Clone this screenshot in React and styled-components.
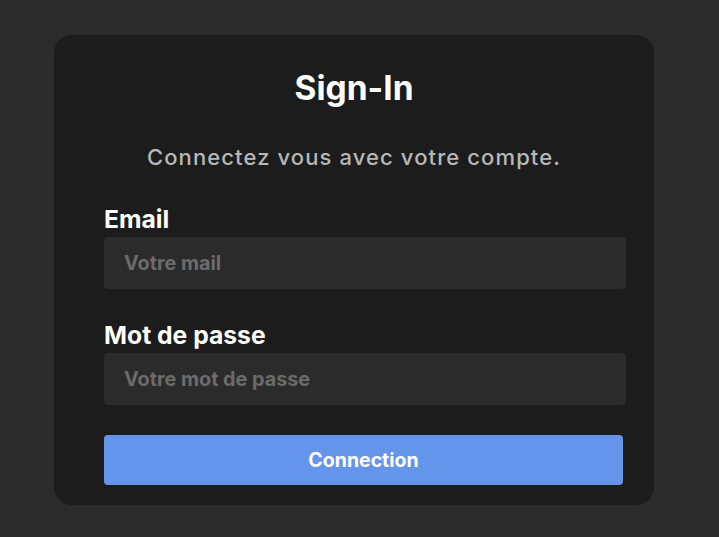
import React from 'react';
import styled, { createGlobalStyle } from 'styled-components';

const GlobalStyle = createGlobalStyle`
    body {
        margin: 0;
        background: #2b2b2b;
        font-family: Inter, "Noto Sans", sans-serif;
    }
`;

const Page = styled.div`
    min-height: 537px;
    padding-top: 35px;
    box-sizing: border-box;
`;

const Card = styled.form`
    width: 600px;
    height: 470px;
    margin: 0 0 0 54px;
    padding: 33px 0 0 50px;
    box-sizing: border-box;
    background: #1c1c1c;
    border-radius: 18px;
    display: flex;
    flex-direction: column;
    align-items: flex-start;
`;

const Title = styled.h1`
    align-self: stretch;
    margin: 0 50px 0 0;
    font-size: 33.5px;
    line-height: 40px;
    font-weight: 700;
    color: #ffffff;
    text-align: center;
`;

const Subtitle = styled.p`
    align-self: stretch;
    margin: 35px 50px 0 0;
    font-size: 22px;
    line-height: 28px;
    font-weight: 500;
    letter-spacing: 1.1px;
    color: #b8b8b8;
    text-align: center;
`;

const Label = styled.label`
    margin-top: ${props => props.gap}px;
    font-size: 24.7px;
    line-height: 28px;
    font-weight: 700;
    color: #ffffff;
`;

const Input = styled.input`
    width: 522px;
    height: 52px;
    margin-top: 4px;
    padding: 0 20px;
    box-sizing: border-box;
    border: none;
    border-radius: 4px;
    background: #2b2b2b;
    font-family: inherit;
    font-size: 19.8px;
    font-weight: 700;
    color: #ffffff;
    outline: none;

    &::placeholder {
        color: #6b6b6b;
    }
`;

const Button = styled.button`
    width: 519px;
    height: 50px;
    margin-top: 30px;
    border: none;
    border-radius: 4px;
    background: #6495ea;
    font-family: inherit;
    font-size: 19.5px;
    font-weight: 700;
    color: #ffffff;
    cursor: pointer;
`;

export default function App() {
    return (
        <Page>
            <GlobalStyle />
            <Card onSubmit={e => e.preventDefault()}>
                <Title>Sign-In</Title>
                <Subtitle>Connectez vous avec votre compte.</Subtitle>
                <Label gap={34} htmlFor='email'>Email</Label>
                <Input id='email' type='email' placeholder='Votre mail' />
                <Label gap={32} htmlFor='password'>Mot de passe</Label>
                <Input id='password' type='password' placeholder='Votre mot de passe' />
                <Button type='submit'>Connection</Button>
            </Card>
        </Page>
    );
}
